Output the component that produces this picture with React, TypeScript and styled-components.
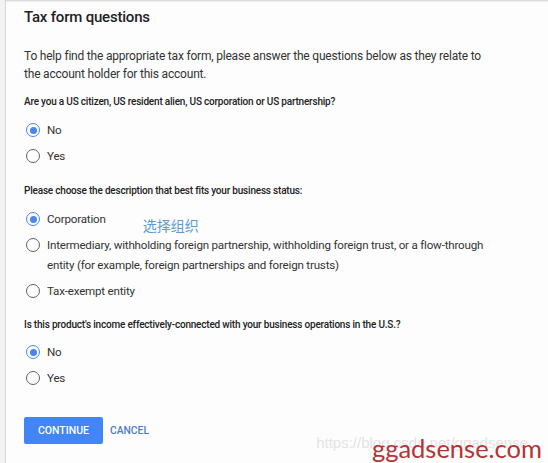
import React from "react";
import styled, { createGlobalStyle } from "styled-components";

const Global = createGlobalStyle`
  html, body { margin: 0; padding: 0; background: #f3f3f3; }
  body { font-family: Roboto, "Noto Sans", Arial, sans-serif; color: #212121; }
`;

const Page = styled.div`
  position: relative;
  width: 548px;
  height: 463px;
  overflow: hidden;
  padding-left: 5px;
  box-sizing: border-box;
  background: #f3f3f3;
`;

const Card = styled.div`
  height: 100%;
  background: #fdfdfd;
  border-left: 1px solid #d6d6d6;
  box-shadow: inset 0 3px 2px -2px #cfcfcf;
  padding: 7px 0 0 18px;
  box-sizing: border-box;
  display: flex;
  flex-direction: column;
`;

const Title = styled.h1`
  margin: 0;
  font-size: 15px;
  letter-spacing: -0.2px;
  line-height: 20px;
  font-weight: 500;
  color: #222;
`;

const Intro = styled.p`
  margin: 20px 0 0;
  font-size: 12px;
  letter-spacing: -0.2px;
  line-height: 18px;
  color: #333;
  width: 468px;
`;

const Question = styled.div<{ $mt: number }>`
  margin-top: ${(p) => p.$mt}px;
  font-size: 10px;
  letter-spacing: -0.2px;
  line-height: 16px;
  font-weight: 500;
  color: #222;
`;

const Group = styled.div<{ $mt: number }>`
  margin-top: ${(p) => p.$mt}px;
  display: flex;
  flex-direction: column;
`;

const Option = styled.label`
  display: flex;
  align-items: flex-start;
  gap: 7px;
  padding: 3px 0;
  font-size: 11.6px;
  letter-spacing: -0.2px;
  line-height: 20px;
  color: #333;
  width: 470px;
`;

const Circle = styled.span<{ $on: boolean }>`
  flex: none;
  width: 14px;
  height: 14px;
  margin: 3px 0 0 2px;
  border-radius: 50%;
  box-sizing: border-box;
  border: 1.6px solid ${(p) => (p.$on ? "#4a86e8" : "#5f6368")};
  display: flex;
  align-items: center;
  justify-content: center;
  &::after {
    content: "";
    width: 7px;
    height: 7px;
    border-radius: 50%;
    background: ${(p) => (p.$on ? "#4a86e8" : "transparent")};
  }
`;

const Note = styled.span`
  margin: 6px 0 -6px 30px;
  font-family: "Noto Sans CJK SC", sans-serif;
  font-size: 14px;
  line-height: 20px;
  letter-spacing: 0;
  color: #5b9bd5;
`;

const Actions = styled.div`
  margin-top: 26px;
  display: flex;
  align-items: center;
  gap: 7px;
`;

const Primary = styled.button`
  height: 27px;
  width: 79px;
  padding: 0;
  border: none;
  border-radius: 2px;
  background: #4285f4;
  color: #fff;
  font-family: Roboto, sans-serif;
  font-size: 10.5px;
  font-weight: 500;
`;

const Flat = styled.button`
  height: 27px;
  padding: 0;
  border: none;
  background: transparent;
  color: #4a7bd0;
  font-family: Roboto, sans-serif;
  font-size: 10.3px;
  font-weight: 500;
`;

const Watermark = styled.div`
  position: absolute;
  right: 6px;
  bottom: -2px;
  display: flex;
  flex-direction: column;
  align-items: flex-end;
`;

const Url = styled.span`
  position: absolute;
  right: 14px;
  top: 3px;
  font-family: "Liberation Sans", sans-serif;
  font-size: 15px;
  color: #e4e4e4;
  white-space: nowrap;
`;

const Brand = styled.span`
  position: relative;
  font-family: Lato, sans-serif;
  font-size: 25.5px;
  line-height: 34px;
  color: #b23535;
`;

type Opt = { label: React.ReactNode; on: boolean; extra?: React.ReactNode };

const Radio = ({ label, on, extra }: Opt) => (
  <Option>
    <Circle $on={on} />
    <span>{label}</span>
    {extra}
  </Option>
);

export default function App() {
  return (
    <>
      <Global />
      <Page>
        <Card>
          <Title>Tax form questions</Title>
          <Intro>
            To help find the appropriate tax form, please answer the questions below as they relate to
            the account holder for this account.
          </Intro>
          <Question $mt={11}>Are you a US citizen, US resident alien, US corporation or US partnership?</Question>
          <Group $mt={7}>
            <Radio on label="No" />
            <Radio on={false} label="Yes" />
          </Group>
          <Question $mt={14}>Please choose the description that best fits your business status:</Question>
          <Group $mt={7}>
            <Radio on label="Corporation" extra={<Note>选择组织</Note>} />
            <Radio
              on={false}
              label="Intermediary, withholding foreign partnership, withholding foreign trust, or a flow-through entity (for example, foreign partnerships and foreign trusts)"
            />
            <Radio on={false} label="Tax-exempt entity" />
          </Group>
          <Question $mt={13}>Is this product's income effectively-connected with your business operations in the U.S.?</Question>
          <Group $mt={6}>
            <Radio on label="No" />
            <Radio on={false} label="Yes" />
          </Group>
          <Actions>
            <Primary>CONTINUE</Primary>
            <Flat>CANCEL</Flat>
          </Actions>
        </Card>
        <Watermark>
          <Url>https://blog.csdn.net/ggadsense</Url>
          <Brand>ggadsense.com</Brand>
        </Watermark>
      </Page>
    </>
  );
}
